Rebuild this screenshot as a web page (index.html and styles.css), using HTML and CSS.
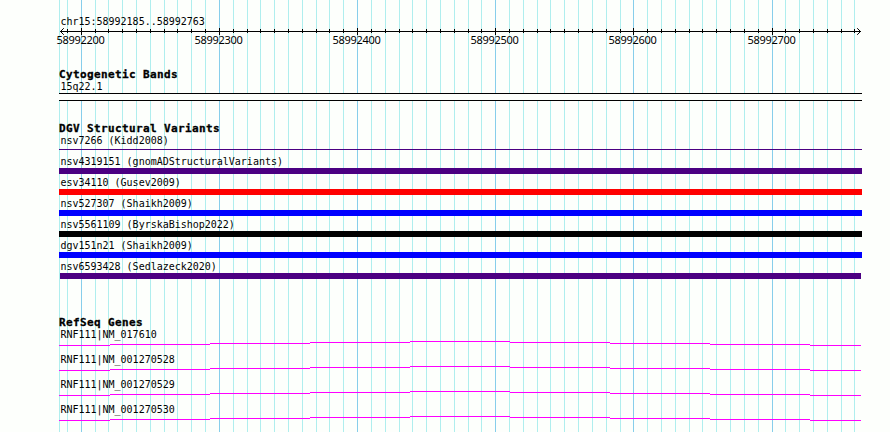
FILE: index.html
```html
<!DOCTYPE html>
<html lang="en">
<head>
  <meta charset="UTF-8" />
  <title>chr15:58992185..58992763</title>
  <link rel="stylesheet" href="styles.css">
</head>
<body>

  <div class="browser">
    <svg class="grid" width="890" height="432" shape-rendering="crispEdges">
      <path class="minor" d="M59.5 0v432M67.5 0v432M95.5 0v432M108.5 0v432M122.5 0v432M136.5 0v432M150.5 0v432M164.5 0v432M177.5 0v432M191.5 0v432M205.5 0v432M233.5 0v432M247.5 0v432M260.5 0v432M274.5 0v432M288.5 0v432M302.5 0v432M316.5 0v432M329.5 0v432M343.5 0v432M371.5 0v432M385.5 0v432M399.5 0v432M412.5 0v432M426.5 0v432M440.5 0v432M454.5 0v432M468.5 0v432M481.5 0v432M509.5 0v432M523.5 0v432M537.5 0v432M550.5 0v432M564.5 0v432M578.5 0v432M592.5 0v432M606.5 0v432M620.5 0v432M647.5 0v432M661.5 0v432M675.5 0v432M689.5 0v432M702.5 0v432M716.5 0v432M730.5 0v432M744.5 0v432M758.5 0v432M785.5 0v432M799.5 0v432M813.5 0v432M827.5 0v432M841.5 0v432M854.5 0v432"/>
      <path class="major" d="M81.5 0v432M219.5 0v432M357.5 0v432M495.5 0v432M633.5 0v432M772.5 0v432"/>
    </svg>

    <section class="ruler">
      <div class="label">chr15:58992185..58992763</div>
      <svg class="axis" width="890" height="20" viewBox="0 28 890 20">
        <g class="ticks" shape-rendering="crispEdges">
          <path d="M60 31.5H861"/>
          <path d="M67.5 29v4M95.5 29v4M108.5 29v4M122.5 29v4M136.5 29v4M150.5 29v4M164.5 29v4M177.5 29v4M191.5 29v4M205.5 29v4M233.5 29v4M247.5 29v4M260.5 29v4M274.5 29v4M288.5 29v4M302.5 29v4M316.5 29v4M329.5 29v4M343.5 29v4M371.5 29v4M385.5 29v4M399.5 29v4M412.5 29v4M426.5 29v4M440.5 29v4M454.5 29v4M468.5 29v4M481.5 29v4M509.5 29v4M523.5 29v4M537.5 29v4M550.5 29v4M564.5 29v4M578.5 29v4M592.5 29v4M606.5 29v4M620.5 29v4M647.5 29v4M661.5 29v4M675.5 29v4M689.5 29v4M702.5 29v4M716.5 29v4M730.5 29v4M744.5 29v4M758.5 29v4M785.5 29v4M799.5 29v4M813.5 29v4M827.5 29v4M841.5 29v4M854.5 29v4"/>
          <path d="M81.5 28v7M219.5 28v7M357.5 28v7M495.5 28v7M633.5 28v7M772.5 28v7"/>
        </g>
        <path class="arrow" d="M63.8 28.2L60.5 31.5L63.8 34.8M857.2 28.2L860.5 31.5L857.2 34.8"/>
        <g class="positions">
          <text x="56.5" y="44">58992200</text>
          <text x="194.5" y="44">58992300</text>
          <text x="332.5" y="44">58992400</text>
          <text x="470.5" y="44">58992500</text>
          <text x="608.5" y="44">58992600</text>
          <text x="747.5" y="44">58992700</text>
        </g>
      </svg>
    </section>

    <section class="track cytobands">
      <h2>Cytogenetic Bands</h2>
      <div class="label">15q22.1</div>
      <div class="band"></div>
    </section>

    <section class="track variants">
      <h2>DGV Structural Variants</h2>
      <div class="variant"><div class="label">nsv7266 (Kidd2008)</div><div class="bar thin"></div></div>
      <div class="variant"><div class="label">nsv4319151 (gnomADStructuralVariants)</div><div class="bar indigo"></div></div>
      <div class="variant"><div class="label">esv34110 (Gusev2009)</div><div class="bar red"></div></div>
      <div class="variant"><div class="label">nsv527307 (Shaikh2009)</div><div class="bar blue"></div></div>
      <div class="variant"><div class="label">nsv5561109 (ByrskaBishop2022)</div><div class="bar black"></div></div>
      <div class="variant"><div class="label">dgv151n21 (Shaikh2009)</div><div class="bar blue"></div></div>
      <div class="variant"><div class="label">nsv6593428 (Sedlazeck2020)</div><div class="bar indigo inset"></div></div>
    </section>

    <section class="track genes">
      <h2>RefSeq Genes</h2>
      <div class="gene">
        <div class="label">RNF111|NM_017610</div>
        <svg class="intron" width="803" height="5"><path id="intron" d="M0 4.5H51M51 3.5H151M151 2.5H251M251 1.5H351M351 .5H451M451 1.5H551M551 2.5H651M651 3.5H751M751 4.5H802"/></svg>
      </div>
      <div class="gene">
        <div class="label">RNF111|NM_001270528</div>
        <svg class="intron" width="803" height="5"><use href="#intron"/></svg>
      </div>
      <div class="gene">
        <div class="label">RNF111|NM_001270529</div>
        <svg class="intron" width="803" height="5"><use href="#intron"/></svg>
      </div>
      <div class="gene">
        <div class="label">RNF111|NM_001270530</div>
        <svg class="intron" width="803" height="5"><use href="#intron"/></svg>
      </div>
    </section>
  </div>

</body>
</html>
```
FILE: styles.css
```css
body {
  margin: 0;
  background: #fdfffc;
  color: #000;
  font-family: "DejaVu Sans Mono", monospace;
  font-size: 11px;
  line-height: 13px;
}

.browser {
  position: relative;
  width: 890px;
  height: 432px;
  overflow: hidden;
}

svg {
  display: block;
}

.grid {
  position: absolute;
  top: 0;
  left: 0;
  z-index: -1;
}

.minor {
  stroke: #afeeee;
}

.major {
  stroke: #87ceeb;
}

.label {
  width: max-content;
  height: 13px;
  padding-left: 0.5px;
  margin-left: 1px;
  white-space: pre;
  transform: scaleX(0.908);
  transform-origin: left;
}

/* ruler */
.ruler {
  padding-top: 15px;
}

.ruler .label {
  margin-left: 60px;
}

.ticks, .arrow {
  stroke: #000;
  fill: none;
}

.positions {
  font-family: "Noto Sans", sans-serif;
  font-size: 11px;
  letter-spacing: -0.29px;
}

/* tracks */
.track {
  width: 803px;
  margin-left: 59px;
}

h2 {
  height: 12px;
  margin: 0;
  font-size: 11px;
  line-height: 13px;
  font-weight: bold;
  letter-spacing: 0.38px;
  -webkit-text-stroke: 0.3px #000;
}

.cytobands {
  padding-top: 20px;
}

.band {
  height: 6px;
  background: #fdfffc;
  border-top: 1px solid #000;
  border-bottom: 1px solid #000;
}

.variants {
  padding-top: 21px;
}

.variant {
  height: 21px;
}

.bar {
  height: 6px;
}

.bar.thin {
  height: 1px;
  margin-top: 2px;
  background: #4b0082;
}

.indigo {
  background: #4b0082;
}

.red {
  background: #f00;
}

.blue {
  background: #00f;
}

.black {
  background: #000;
}

.inset {
  margin: 0 1px;
}

.genes {
  padding-top: 35px;
}

.gene {
  height: 25px;
}

.intron {
  stroke: #f0f;
  shape-rendering: crispEdges;
}
```
